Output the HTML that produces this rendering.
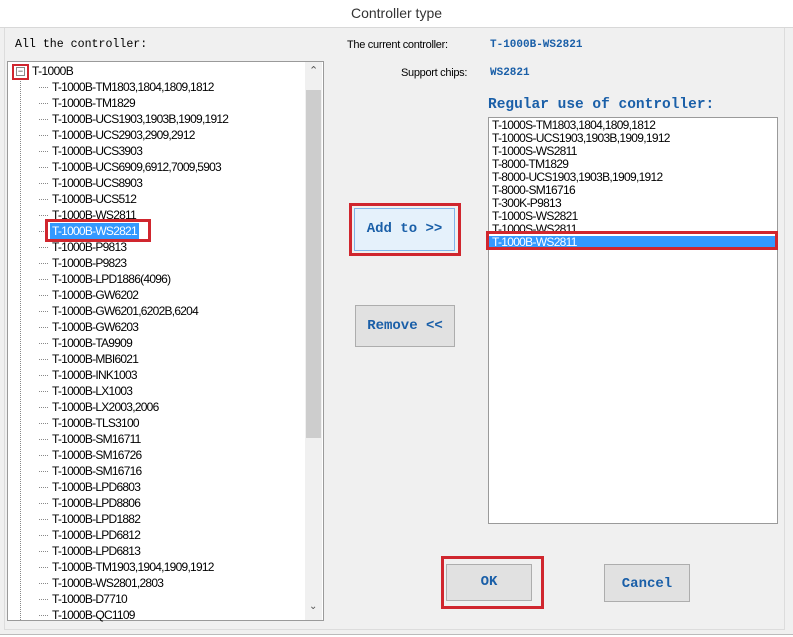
<!DOCTYPE html>
<html><head><style>
*{margin:0;padding:0;box-sizing:border-box}
body{width:793px;height:637px;background:#fff;position:relative;overflow:hidden;font-family:"Liberation Sans",sans-serif}
.abs{position:absolute}
.mono{font-family:"Liberation Mono",monospace}
.tree div{position:absolute;left:52px;height:16px;line-height:16px;font-size:12px;letter-spacing:-0.75px;color:#000;white-space:nowrap}
.tree .h{position:absolute;left:39px;width:9px;border-top:1px dotted #888}
.rl div{height:13px;line-height:13px;font-size:12px;letter-spacing:-0.7px;padding-left:3px;white-space:nowrap}
.btn{position:absolute;background:#e1e1e1;border:1px solid #adadad;color:#1a5fa8;font-family:"Liberation Mono",monospace;font-weight:bold;font-size:14px;text-align:center}
.red{position:absolute;border:3px solid #d0262e}
</style></head><body>
<div class="abs" style="left:0;top:0;width:793px;height:28px;background:#fff;text-align:center;font-size:14px;line-height:27px;color:#333">Controller type</div>
<div class="abs" style="left:0;top:27px;width:793px;height:610px;background:#f0f0f0;border-top:1px solid #d8d8d8"></div>
<div class="abs" style="left:4px;top:28px;width:781px;height:602px;border:1px solid #dcdcdc;border-top:none"></div>
<div class="abs" style="left:0;top:634px;width:793px;height:3px;background:#fff;border-top:1px solid #bbb"></div>
<div class="abs mono" style="left:15px;top:38px;font-size:11.6px;line-height:14px">All the controller:</div>
<div class="abs" style="left:7px;top:61px;width:317px;height:560px;background:#fff;border:1px solid #9a9a9a"></div>
<div class="abs" style="left:305px;top:62px;width:17px;height:558px;background:#f0f0f0"></div>
<div class="abs" style="left:306px;top:90px;width:15px;height:348px;background:#cdcdcd"></div>
<div class="abs" style="left:309px;top:64px;font-size:11px;color:#555">&#8963;</div>
<div class="abs" style="left:309px;top:601px;font-size:10px;color:#555">&#8964;</div>
<div class="abs" style="left:20px;top:78px;height:542px;border-left:1px dotted #888"></div>
<div class="abs" style="left:12px;top:64px;width:17px;height:16px;border:2px solid #d0262e"></div>
<div class="abs" style="left:16px;top:67px;width:9px;height:9px;border:1px solid #888;background:#fff;font-size:9px;line-height:7px;text-align:center;color:#333">&minus;</div>
<div class="abs" style="left:32px;top:63px;font-size:12px;letter-spacing:-0.6px;line-height:16px">T-1000B</div>
<div class="tree" id="tree"></div>
<div class="abs" style="left:50px;top:223px;width:89px;height:16px;background:#3399ff"></div>
<div class="abs" style="left:52px;top:223px;font-size:12px;letter-spacing:-0.75px;line-height:16px;color:#fff">T-1000B-WS2821</div>
<div class="red" style="left:45px;top:219px;width:106px;height:23px"></div>
<div class="abs" style="left:347px;top:38px;font-size:11px;letter-spacing:-0.3px;line-height:14px">The current controller:</div>
<div class="abs" style="left:401px;top:66px;font-size:11px;letter-spacing:-0.3px;line-height:14px">Support chips:</div>
<div class="abs mono" style="left:490px;top:38px;font-size:11px;font-weight:bold;color:#1a5fa8;line-height:14px">T-1000B-WS2821</div>
<div class="abs mono" style="left:490px;top:66px;font-size:11px;font-weight:bold;color:#1a5fa8;line-height:14px">WS2821</div>
<div class="abs mono" style="left:488px;top:96px;font-size:14.5px;font-weight:bold;color:#1a5fa8;line-height:18px">Regular use of controller:</div>
<div class="abs rl" style="left:488px;top:117px;width:290px;height:407px;background:#fff;border:1px solid #9a9a9a;padding-top:1px">
<div>T-1000S-TM1803,1804,1809,1812</div><div>T-1000S-UCS1903,1903B,1909,1912</div><div>T-1000S-WS2811</div><div>T-8000-TM1829</div><div>T-8000-UCS1903,1903B,1909,1912</div><div>T-8000-SM16716</div><div>T-300K-P9813</div><div>T-1000S-WS2821</div><div>T-1000S-WS2811</div><div style="background:#3399ff;color:#fff;margin-right:2px">T-1000B-WS2811</div>
</div>
<div class="red" style="left:486px;top:231px;width:292px;height:19px"></div>
<div class="btn" style="left:354px;top:208px;width:101px;height:43px;line-height:41px;background:#e5f1fb;border-color:#7eb4ea">Add to &gt;&gt;</div>
<div class="red" style="left:349px;top:203px;width:112px;height:53px"></div>
<div class="btn" style="left:355px;top:305px;width:100px;height:42px;line-height:40px">Remove &lt;&lt;</div>
<div class="btn" style="left:446px;top:564px;width:86px;height:37px;line-height:35px">OK</div>
<div class="red" style="left:441px;top:556px;width:103px;height:53px"></div>
<div class="btn" style="left:604px;top:564px;width:86px;height:38px;line-height:38px">Cancel</div>
<script>
var items=["T-1000B-TM1803,1804,1809,1812","T-1000B-TM1829","T-1000B-UCS1903,1903B,1909,1912","T-1000B-UCS2903,2909,2912","T-1000B-UCS3903","T-1000B-UCS6909,6912,7009,5903","T-1000B-UCS8903","T-1000B-UCS512","T-1000B-WS2811","","T-1000B-P9813","T-1000B-P9823","T-1000B-LPD1886(4096)","T-1000B-GW6202","T-1000B-GW6201,6202B,6204","T-1000B-GW6203","T-1000B-TA9909","T-1000B-MBI6021","T-1000B-INK1003","T-1000B-LX1003","T-1000B-LX2003,2006","T-1000B-TLS3100","T-1000B-SM16711","T-1000B-SM16726","T-1000B-SM16716","T-1000B-LPD6803","T-1000B-LPD8806","T-1000B-LPD1882","T-1000B-LPD6812","T-1000B-LPD6813","T-1000B-TM1903,1904,1909,1912","T-1000B-WS2801,2803","T-1000B-D7710","T-1000B-QC1109"];
var t=document.getElementById('tree'),h='';
items.forEach(function(s,i){var y=79+i*16;h+='<span class="h" style="top:'+(y+8)+'px"></span>';if(s)h+='<div style="top:'+y+'px">'+s+'</div>';});
t.innerHTML=h;
</script>
</body></html>
